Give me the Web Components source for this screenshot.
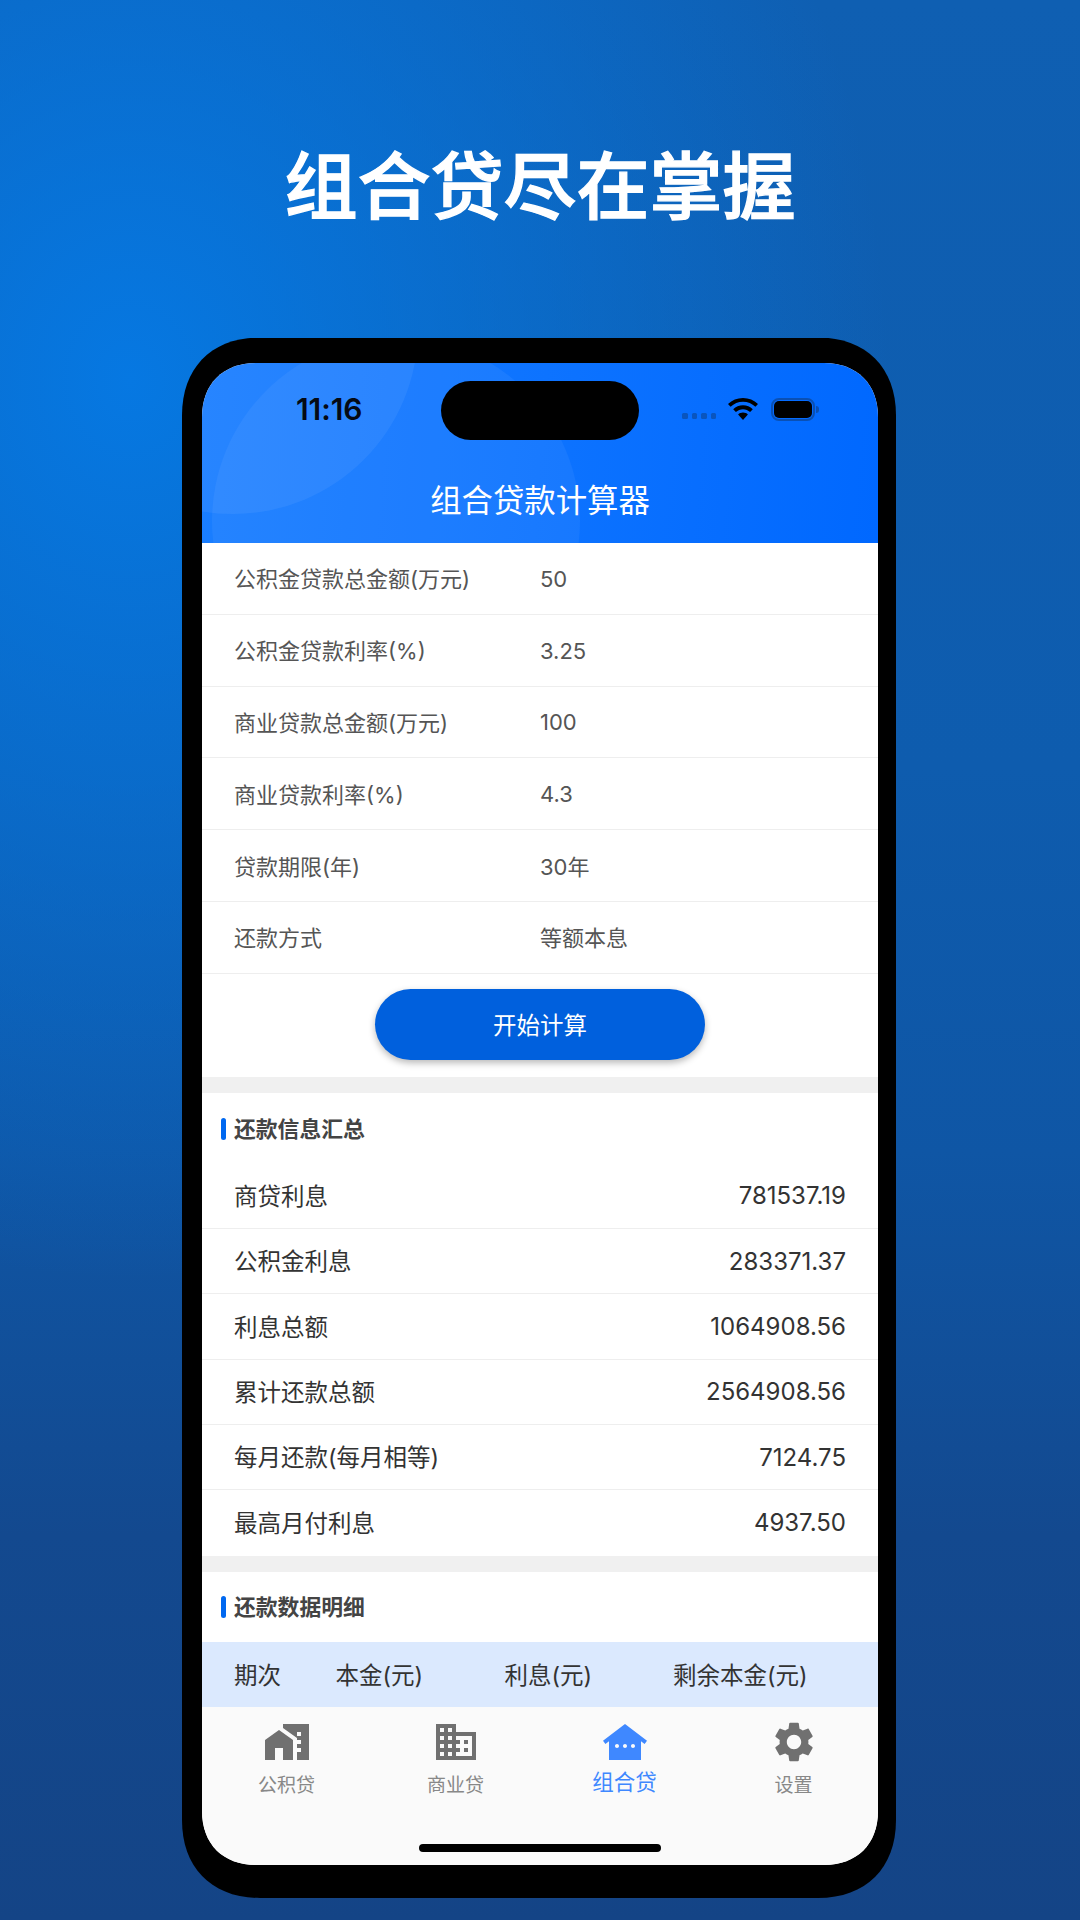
<!DOCTYPE html>
<html lang="zh">
<head>
<meta charset="utf-8">
<title>组合贷尽在掌握</title>
<style>
    html, body { margin: 0; padding: 0; }
    body {
        width: 1080px;
        height: 1920px;
        overflow: hidden;
        font-family: Inter, "Noto Sans CJK SC", sans-serif;
    }
</style>
</head>
<body>
<promo-page heading="组合贷尽在掌握">
    <phone-frame>
        <app-header heading="组合贷款计算器"></app-header>
        <form-row label="公积金贷款总金额(万元)" value="50"></form-row>
        <form-row label="公积金贷款利率(%)" value="3.25"></form-row>
        <form-row label="商业贷款总金额(万元)" value="100"></form-row>
        <form-row label="商业贷款利率(%)" value="4.3"></form-row>
        <form-row label="贷款期限(年)" value="30年" cjk></form-row>
        <form-row label="还款方式" value="等额本息" cjk></form-row>
        <calc-button>开始计算</calc-button>
        <section-title>还款信息汇总</section-title>
        <result-row label="商贷利息" value="781537.19"></result-row>
        <result-row label="公积金利息" value="283371.37"></result-row>
        <result-row label="利息总额" value="1064908.56"></result-row>
        <result-row label="累计还款总额" value="2564908.56"></result-row>
        <result-row label="每月还款(每月相等)" value="7124.75"></result-row>
        <result-row label="最高月付利息" value="4937.50" last></result-row>
        <section-title>还款数据明细</section-title>
        <table-head></table-head>
        <tab-bar slot="tabs">
            <tab-item label="公积贷" icon="homework"></tab-item>
            <tab-item label="商业贷" icon="domain"></tab-item>
            <tab-item label="组合贷" icon="houses" active></tab-item>
            <tab-item label="设置" icon="settings"></tab-item>
        </tab-bar>
    </phone-frame>
</promo-page>

<script>
class PromoPage extends HTMLElement {
    constructor () {
        super()
        this.attachShadow({mode: 'open'})
    }

    connectedCallback () {
        this.shadowRoot.innerHTML = `
            <style>
                :host {
                    display: flex;
                    flex-direction: column;
                    align-items: center;
                    width: 1080px;
                    height: 1920px;
                    background:
                        radial-gradient(ellipse 760px 900px at 130px 380px, #0678e2 0, rgba(6, 120, 226, 0) 100%),
                        linear-gradient(180deg, #0f5fb2 0%, #0e5cae 40%, #0f56a5 60%, #13498f 80%, #144486 100%);
                }
                h1 {
                    margin: 126px 0 0;
                    height: 110px;
                    line-height: 110px;
                    font-size: 73px;
                    font-weight: 500;
                    -webkit-text-stroke: 1.300px #fff;
                    color: #fff;
                    font-family: "Noto Sans CJK SC", sans-serif;
                }
                .gap { height: 101.500px; flex: none; }
            </style>
            <h1>${this.getAttribute('heading')}</h1>
            <div class="gap"></div>
            <slot></slot>
        `
    }
}

class PhoneFrame extends HTMLElement {
    constructor () {
        super()
        this.attachShadow({mode: 'open'})
    }

    connectedCallback () {
        this.shadowRoot.innerHTML = `
            <style>
                :host {
                    display: block;
                    box-sizing: border-box;
                    width: 714px;
                    height: 1560.500px;
                    margin-right: 2px;
                    padding: 25.500px 18px 33px 20px;
                    background: #000;
                    clip-path: path("M78 0H636C684 0 714 30 714 78V1482.500C714 1530.500 684 1560.500 636 1560.500H78C30 1560.500 0 1530.500 0 1482.500V78C0 30 30 0 78 0Z");
                }
                .screen {
                    display: flex;
                    flex-direction: column;
                    height: 100%;
                    background: #fff;
                    overflow: hidden;
                    clip-path: path("M54 0H622C655 0 676 21 676 54V1448C676 1481 655 1502 622 1502H54C21 1502 0 1481 0 1448V54C0 21 21 0 54 0Z");
                }
                .scroll { flex: 1; min-height: 0; overflow: hidden; }
                .tabs { flex: none; }
            </style>
            <div class="screen">
                <div class="scroll"><slot></slot></div>
                <div class="tabs"><slot name="tabs"></slot></div>
            </div>
        `
    }
}

class StatusBar extends HTMLElement {
    constructor () {
        super()
        this.attachShadow({mode: 'open'})
    }

    connectedCallback () {
        this.shadowRoot.innerHTML = `
            <style>
                :host {
                    display: flex;
                    align-items: center;
                    height: 94px;
                    padding-bottom: 2px;
                    box-sizing: border-box;
                    position: relative;
                }
                .time {
                    margin-left: 94px;
                    width: 66px;
                    font: 600 30px Inter, sans-serif;
                    letter-spacing: -0.1px;
                    color: #050a14;
                }
                .island {
                    position: absolute;
                    left: 239px;
                    top: 18px;
                    width: 198px;
                    height: 59px;
                    border-radius: 30px;
                    background: #000;
                }
                .right {
                    margin-left: auto;
                    margin-right: 59px;
                    display: flex;
                    align-items: center;
                    gap: 12px;
                }
                .dots { display: flex; gap: 4px; margin-top: 14px; }
                .dots i {
                    width: 5.500px;
                    height: 6px;
                    border-radius: 1.500px;
                    background: #0a55bd;
                }
                svg { display: block; }
                .battery {
                    display: flex;
                    align-items: center;
                    gap: 1px;
                    margin-left: 1px;
                }
                .shell {
                    box-sizing: border-box;
                    width: 44px;
                    height: 23px;
                    padding: 1px;
                    border: 2px solid #0a50b4;
                    border-radius: 8px;
                }
                .fill { height: 100%; background: #000; border-radius: 5px; }
                .nub {
                    width: 3px;
                    height: 7px;
                    border-radius: 0 3px 3px 0;
                    background: #0a50b4;
                }
            </style>
            <div class="time">11:16</div>
            <div class="island"></div>
            <div class="right">
                <div class="dots"><i></i><i></i><i></i><i></i></div>
                <svg width="30" height="22" viewBox="0 0 30 22">
                    <path d="M15 0C9.200 0 4 2.300 0 6l2.600 2.800C5.900 5.700 10.200 3.800 15 3.800s9.100 1.900 12.400 5L30 6C26 2.300 20.800 0 15 0z" fill="#000"/>
                    <path d="M15 7.300c-3.800 0-7.200 1.500-9.800 3.900l2.700 2.800c1.900-1.700 4.400-2.800 7.100-2.800s5.200 1.100 7.100 2.800l2.700-2.800C22.200 8.800 18.800 7.300 15 7.300z" fill="#000"/>
                    <path d="M15 14.600c-1.900 0-3.600.7-4.900 1.900L15 22l4.900-5.500c-1.300-1.200-3-1.900-4.900-1.900z" fill="#000"/>
                </svg>
                <div class="battery">
                    <div class="shell"><div class="fill"></div></div>
                    <div class="nub"></div>
                </div>
            </div>
        `
    }
}

class AppHeader extends HTMLElement {
    constructor () {
        super()
        this.attachShadow({mode: 'open'})
    }

    connectedCallback () {
        this.shadowRoot.innerHTML = `
            <style>
                :host {
                    display: block;
                    position: relative;
                    height: 180px;
                    overflow: hidden;
                    background: linear-gradient(95deg, #1a7eff 0%, #0068ff 100%);
                }
                .blob {
                    position: absolute;
                    border-radius: 50%;
                    background: rgba(255, 255, 255, 0.05);
                }
                .one { left: -154px; top: -219px; width: 370px; height: 370px; background: rgba(255, 255, 255, 0.06); }
                .two { left: 10px; top: -26px; width: 368px; height: 368px; }
                .bar { position: relative; }
                h2 {
                    position: relative;
                    margin: 12px 0 0;
                    text-align: center;
                    color: #fff;
                    font: 400 31.400px/60px "Noto Sans CJK SC", sans-serif;
                }
            </style>
            <div class="blob one"></div>
            <div class="blob two"></div>
            <status-bar class="bar"></status-bar>
            <h2>${this.getAttribute('heading')}</h2>
        `
    }
}

class FormRow extends HTMLElement {
    constructor () {
        super()
        this.attachShadow({mode: 'open'})
    }

    connectedCallback () {
        this.shadowRoot.innerHTML = `
            <style>
                :host {
                    display: flex;
                    align-items: center;
                    box-sizing: border-box;
                    height: 71.800px;
                    padding-left: 32px;
                    border-bottom: 1px solid #eeeeee;
                    font-size: 22px;
                    color: #555;
                }
                .label { width: 306px; flex: none; padding-bottom: 2px; }
                .value { padding-top: 1px; }
                :host([cjk]) .value { padding: 0 0 2px; }
            </style>
            <div class="label">${this.getAttribute('label')}</div>
            <div class="value">${this.getAttribute('value')}</div>
        `
    }
}

class CalcButton extends HTMLElement {
    constructor () {
        super()
        this.attachShadow({mode: 'open'})
    }

    connectedCallback () {
        this.shadowRoot.innerHTML = `
            <style>
                :host {
                    display: flex;
                    justify-content: center;
                    box-sizing: border-box;
                    height: 103.500px;
                    padding-top: 15.500px;
                }
                button {
                    width: 330px;
                    height: 71px;
                    padding: 0 0 2px;
                    border: 0;
                    border-radius: 36px;
                    background: #0060dd;
                    color: #fff;
                    font: 400 23.500px "Noto Sans CJK SC", sans-serif;
                    box-shadow: 0 3px 7px rgba(0, 0, 0, 0.28);
                }
            </style>
            <button><slot></slot></button>
        `
    }
}

class SectionTitle extends HTMLElement {
    constructor () {
        super()
        this.attachShadow({mode: 'open'})
    }

    connectedCallback () {
        this.shadowRoot.innerHTML = `
            <style>
                :host {
                    display: block;
                    border-top: 16px solid #f0f0f0;
                }
                .head {
                    display: flex;
                    align-items: center;
                    gap: 8px;
                    height: 70.500px;
                    padding-left: 19px;
                    font: 700 21.800px "Noto Sans CJK SC", sans-serif;
                    color: #444;
                }
                .mark {
                    width: 5px;
                    height: 22px;
                    border-radius: 3px;
                    background: #0068f0;
                }
                .text { padding-bottom: 3px; }
            </style>
            <div class="head"><div class="mark"></div><div class="text"><slot></slot></div></div>
        `
    }
}

class ResultRow extends HTMLElement {
    constructor () {
        super()
        this.attachShadow({mode: 'open'})
    }

    connectedCallback () {
        this.shadowRoot.innerHTML = `
            <style>
                :host {
                    display: flex;
                    align-items: center;
                    justify-content: space-between;
                    box-sizing: border-box;
                    height: 65.300px;
                    padding: 0 32px;
                    border-bottom: 1px solid #eeeeee;
                    font-size: 23.500px;
                    color: #333;
                }
                :host([last]) { border-bottom: 0; }
                .label { padding-bottom: 2px; }
                .value { font-size: 24px; }
            </style>
            <div class="label">${this.getAttribute('label')}</div>
            <div class="value">${this.getAttribute('value')}</div>
        `
    }
}

class TableHead extends HTMLElement {
    constructor () {
        super()
        this.attachShadow({mode: 'open'})
    }

    connectedCallback () {
        this.shadowRoot.innerHTML = `
            <style>
                :host {
                    display: grid;
                    grid-template-columns: 101.500px 169px 168.500px 1fr;
                    align-items: center;
                    box-sizing: border-box;
                    height: 66px;
                    padding: 0 0 2px 32px;
                    background: #dbe9fe;
                    font-size: 23.500px;
                    color: #333;
                }
            </style>
            <div>期次</div>
            <div>本金(元)</div>
            <div>利息(元)</div>
            <div>剩余本金(元)</div>
        `
    }
}

const ICONS = {
    homework: '<path d="M1 11v10h5v-6h4v6h5V11L8 6z"/><path d="M10 3v1.970l7 5V11h2v2h-2v2h2v2h-2v4h6V3H10zm9 6h-2V7h2v2z"/>',
    domain: '<path d="M12 7V3H2v18h20V7H12zM6 19H4v-2h2v2zm0-4H4v-2h2v2zm0-4H4V9h2v2zm0-4H4V5h2v2zm4 12H8v-2h2v2zm0-4H8v-2h2v2zm0-4H8V9h2v2zm0-4H8V5h2v2zm10 12h-8v-2h2v-2h-2v-2h2v-2h-2V9h8v10zm-2-8h-2v2h2v-2zm0 4h-2v2h2v-2z"/>',
    houses: '<path d="M12 3L1 11.400l1.210 1.590L4 11.620V21h16v-9.380l1.790 1.360L23 11.400 12 3zM8 15c-.55 0-1-.45-1-1s.45-1 1-1 1 .45 1 1-.45 1-1 1zm4 0c-.55 0-1-.45-1-1s.45-1 1-1 1 .45 1 1-.45 1-1 1zm4 0c-.55 0-1-.45-1-1s.45-1 1-1 1 .45 1 1-.45 1-1 1z"/>',
    settings: '<path d="M19.140 12.940c.04-.3.06-.61.06-.94 0-.32-.02-.64-.07-.94l2.030-1.580c.18-.14.23-.41.12-.61l-1.920-3.320c-.12-.22-.37-.29-.59-.22l-2.390.96c-.5-.38-1.030-.7-1.620-.94L14.400 2.810c-.04-.24-.24-.41-.48-.41h-3.840c-.24 0-.43.17-.47.41L9.250 5.350c-.59.24-1.130.57-1.620.94l-2.390-.96c-.22-.08-.47 0-.59.22L2.740 8.870c-.12.21-.08.47.12.61l2.030 1.580c-.05.3-.09.63-.09.94s.02.64.07.94l-2.030 1.580c-.18.14-.23.41-.12.61l1.920 3.320c.12.22.37.29.59.22l2.390-.96c.5.38 1.030.7 1.620.94l.36 2.540c.05.24.24.41.48.41h3.840c.24 0 .44-.17.47-.41l.36-2.540c.59-.24 1.130-.56 1.620-.94l2.390.96c.22.08.47 0 .59-.22l1.920-3.320c.12-.22.07-.47-.12-.61l-2.010-1.580zM12 15.600c-1.980 0-3.600-1.620-3.600-3.600s1.620-3.600 3.600-3.600 3.600 1.620 3.600 3.600-1.620 3.600-3.600 3.600z"/>'
}

class TabItem extends HTMLElement {
    constructor () {
        super()
        this.attachShadow({mode: 'open'})
    }

    connectedCallback () {
        this.shadowRoot.innerHTML = `
            <style>
                :host {
                    display: flex;
                    flex-direction: column;
                    align-items: center;
                    color: #888;
                    font: 400 19px/26px "Noto Sans CJK SC", sans-serif;
                }
                :host([active]) {
                    color: #3f88ff;
                    font-size: 21.500px;
                    line-height: 30px;
                }
                svg { display: block; width: 48px; height: 48px; fill: #707070; margin-bottom: 4.500px; }
                :host([active]) svg { fill: #3f88ff; margin-bottom: 0; }
            </style>
            <svg viewBox="0 0 24 24">${ICONS[this.getAttribute('icon')]}</svg>
            <div>${this.getAttribute('label')}</div>
        `
    }
}

class TabBar extends HTMLElement {
    constructor () {
        super()
        this.attachShadow({mode: 'open'})
    }

    connectedCallback () {
        this.shadowRoot.innerHTML = `
            <style>
                :host {
                    display: block;
                    box-sizing: border-box;
                    height: 158px;
                    padding-top: 11px;
                    background: #fafafa;
                }
                .items { display: grid; grid-template-columns: repeat(4, 1fr); height: 126px; }
                .home {
                    width: 242px;
                    height: 8px;
                    margin: 0 auto;
                    border-radius: 4px;
                    background: #000;
                }
            </style>
            <div class="items"><slot></slot></div>
            <div class="home"></div>
        `
    }
}

window.customElements.define('promo-page', PromoPage)
window.customElements.define('phone-frame', PhoneFrame)
window.customElements.define('status-bar', StatusBar)
window.customElements.define('app-header', AppHeader)
window.customElements.define('form-row', FormRow)
window.customElements.define('calc-button', CalcButton)
window.customElements.define('section-title', SectionTitle)
window.customElements.define('result-row', ResultRow)
window.customElements.define('table-head', TableHead)
window.customElements.define('tab-item', TabItem)
window.customElements.define('tab-bar', TabBar)
</script>
</body>
</html>
